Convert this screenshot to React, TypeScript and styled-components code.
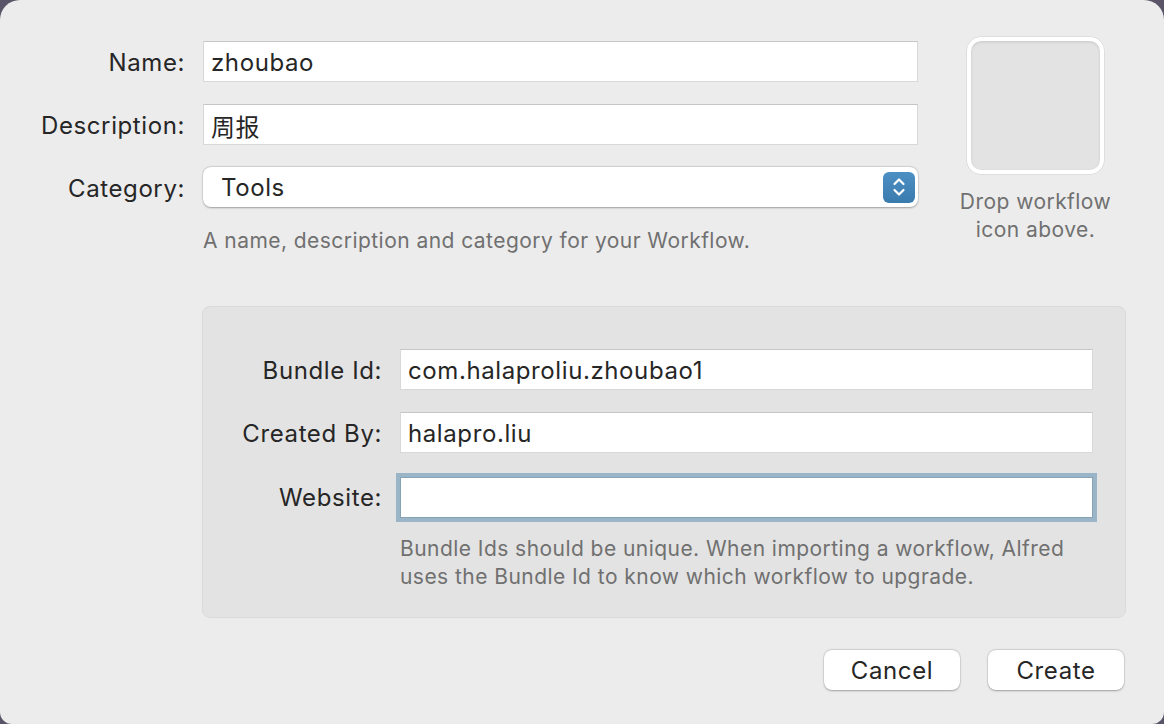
import React from "react";
import styled, { createGlobalStyle } from "styled-components";

const textColor = "#262626";
const mutedColor = "#707070";
const fontStack = `Inter, "Noto Sans CJK SC", sans-serif`;

const GlobalStyle = createGlobalStyle`
  html, body {
    margin: 0;
    padding: 0;
    background: #5a5468;
  }
  body {
    font-family: ${fontStack};
    color: ${textColor};
    -webkit-font-smoothing: antialiased;
  }
  * { box-sizing: border-box; }
`;

export default function App() {
  return (
    <>
      <GlobalStyle />
      <Window>
        <TopSection>
          <div>
            <FormGrid $labelWidth={185} $fieldWidth={715}>
              <Label>Name:</Label>
              <TextField defaultValue="zhoubao" />
              <Label>Description:</Label>
              <TextField defaultValue="周报" />
              <Label>Category:</Label>
              <Select>
                <span>Tools</span>
                <Stepper>
                  <svg width="16" height="22" viewBox="0 0 16 22">
                    <path d="M3.5 8 L8 3.5 L12.5 8" fill="none" stroke="#fff" strokeWidth="2.2" strokeLinecap="round" strokeLinejoin="round" />
                    <path d="M3.5 14 L8 18.5 L12.5 14" fill="none" stroke="#fff" strokeWidth="2.2" strokeLinecap="round" strokeLinejoin="round" />
                  </svg>
                </Stepper>
              </Select>
            </FormGrid>
            <Hint $indent={203}>A name, description and category for your Workflow.</Hint>
          </div>
          <IconColumn>
            <IconWell />
            <Hint $center>
              Drop workflow
              <br />
              icon above.
            </Hint>
          </IconColumn>
        </TopSection>

        <Panel>
          <FormGrid $labelWidth={179} $fieldWidth={693}>
            <Label>Bundle Id:</Label>
            <TextField defaultValue="com.halaproliu.zhoubao1" />
            <Label>Created By:</Label>
            <TextField defaultValue="halapro.liu" />
            <Label>Website:</Label>
            <TextField $focused defaultValue="" />
          </FormGrid>
          <Hint $indent={197} $top={17}>
            Bundle Ids should be unique. When importing a workflow, Alfred
            <br />
            uses the Bundle Id to know which workflow to upgrade.
          </Hint>
        </Panel>

        <ButtonRow>
          <Button>Cancel</Button>
          <Button>Create</Button>
        </ButtonRow>
      </Window>
    </>
  );
}

const Window = styled.div`
  width: 1164px;
  height: 724px;
  background: #ececec;
  border-radius: 20px 20px 12px 12px;
  overflow: hidden;
  padding-top: 41px;
`;

const TopSection = styled.div`
  display: flex;
  align-items: flex-start;
  height: 265px;
`;

const FormGrid = styled.div<{ $labelWidth: number; $fieldWidth: number }>`
  display: grid;
  grid-template-columns: ${(p) => p.$labelWidth}px ${(p) => p.$fieldWidth}px;
  column-gap: 18px;
  row-gap: 22px;
  align-items: center;
`;

const Label = styled.label`
  text-align: right;
  font-size: 24px;
  letter-spacing: 0.6px;
  color: ${textColor};
  white-space: nowrap;
  padding-top: 2px;
`;

const TextField = styled.input<{ $focused?: boolean }>`
  height: 41px;
  width: 100%;
  border: 1px solid #d8d8d8;
  border-top-color: #c6c6c6;
  background: #fff;
  font-family: ${fontStack};
  font-size: 24px;
  letter-spacing: 0.6px;
  color: ${textColor};
  padding: 2px 7px 0;
  outline: none;
  margin-top: ${(p) => (p.$focused ? "2px" : "0")};
  box-shadow: ${(p) => (p.$focused ? "0 0 0 4px #9ab5c7" : "none")};
  border-color: ${(p) => (p.$focused ? "#86a3b6" : undefined)};
`;

const Select = styled.div`
  height: 40px;
  background: #fff;
  border-radius: 8px;
  box-shadow: 0 0.5px 2px rgba(0, 0, 0, 0.3), 0 0 0 0.5px rgba(0, 0, 0, 0.08);
  display: flex;
  align-items: center;
  justify-content: space-between;
  padding: 0 3px 0 18px;
  font-size: 24px;
  letter-spacing: 0.6px;
`;

const Stepper = styled.div`
  width: 32px;
  height: 31px;
  border-radius: 6px;
  background: linear-gradient(#4c8fc2, #3a7bae);
  display: flex;
  align-items: center;
  justify-content: center;
`;

const Hint = styled.div<{ $indent?: number; $top?: number; $center?: boolean }>`
  font-size: 21px;
  letter-spacing: 0.45px;
  line-height: 28px;
  color: ${mutedColor};
  margin-left: ${(p) => p.$indent ?? 0}px;
  margin-top: ${(p) => p.$top ?? 20}px;
  text-align: ${(p) => (p.$center ? "center" : "left")};
  white-space: nowrap;
`;

const IconColumn = styled.div`
  margin-left: 49px;
  margin-top: -4px;
  width: 137px;
  display: flex;
  flex-direction: column;
  align-items: center;
`;

const IconWell = styled.div`
  width: 137px;
  height: 137px;
  border-radius: 14px;
  border: 4px solid #fff;
  background: #e3e3e3;
  box-shadow: 0 0 0 0.5px rgba(0, 0, 0, 0.12), inset 0 1px 3px rgba(0, 0, 0, 0.12);
  margin-bottom: -6px;
`;

const Panel = styled.div`
  margin-left: 202px;
  width: 924px;
  height: 312px;
  background: #e3e3e3;
  border: 1px solid #dadada;
  border-radius: 8px;
  padding: 42px 0 0 0;
`;

const ButtonRow = styled.div`
  display: flex;
  justify-content: flex-end;
  gap: 28px;
  padding-right: 40px;
  margin-top: 32px;
`;

const Button = styled.button`
  width: 136px;
  height: 40px;
  border: none;
  border-radius: 8px;
  background: #fff;
  box-shadow: 0 0.5px 2px rgba(0, 0, 0, 0.3), 0 0 0 0.5px rgba(0, 0, 0, 0.08);
  font-family: ${fontStack};
  font-size: 24px;
  letter-spacing: 0.6px;
  color: ${textColor};
`;
